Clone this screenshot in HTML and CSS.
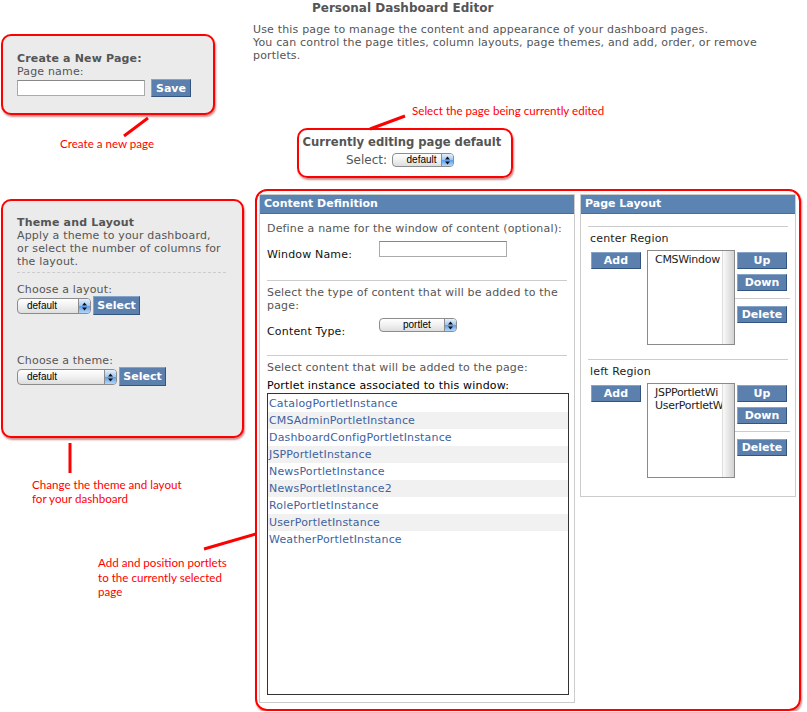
FILE: index.html
```html
<!DOCTYPE html>
<html lang="en">
  <head>
    <meta charset="UTF-8" />
    <meta name="viewport" content="width=device-width, initial-scale=1.0" />
    <title>Personal Dashboard Editor</title>
    <link rel="stylesheet" href="styles.css">
  </head>
  <body>
    <div class="page">
      <div class="left">
        <div class="box create">
          <div class="box-title">Create a New Page:</div>
          <div>Page name:</div>
          <div class="field-row">
            <input class="text-input" type="text">
            <button class="btn save">Save</button>
          </div>
        </div>

        <div class="box theme">
          <div class="box-title">Theme and Layout</div>
          <p class="box-text">Apply a theme to your dashboard,<br>or select the number of columns for<br>the layout.</p>
          <hr class="dashed">
          <div class="choose">Choose a layout:</div>
          <div class="field-row">
            <div class="select layout-select"><span class="value">default</span><span class="arrows"><svg width="5" height="9" viewBox="0 0 5 9"><path d="M2.5 0.5L5 3.5H0z M2.5 8.5L5 5.5H0z" fill="#111"/></svg></span></div>
            <button class="btn select-btn">Select</button>
          </div>
          <div class="choose theme-choose">Choose a theme:</div>
          <div class="field-row">
            <div class="select theme-select"><span class="value">default</span><span class="arrows"><svg width="5" height="9" viewBox="0 0 5 9"><path d="M2.5 0.5L5 3.5H0z M2.5 8.5L5 5.5H0z" fill="#111"/></svg></span></div>
            <button class="btn select-btn">Select</button>
          </div>
        </div>
      </div>

      <div class="right">
        <h1>Personal Dashboard Editor</h1>
        <p class="intro">Use this page to manage the content and appearance of your dashboard pages.<br>You can control the page titles, column layouts, page themes, and add, order, or remove portlets.</p>

        <div class="editing">
          <div class="editing-title">Currently editing page default</div>
          <div class="editing-row">
            <span>Select:</span>
            <div class="select page-select"><span class="value">default</span><span class="arrows"><svg width="5" height="9" viewBox="0 0 5 9"><path d="M2.5 0.5L5 3.5H0z M2.5 8.5L5 5.5H0z" fill="#111"/></svg></span></div>
          </div>
        </div>

        <div class="workspace">
          <div class="portlet content-def">
            <div class="portlet-header">Content Definition</div>
            <div class="portlet-body">
              <p class="step first">Define a name for the window of content (optional):</p>
              <div class="form-row">
                <label class="form-label">Window Name:</label>
                <input class="text-input window-name" type="text">
              </div>
              <hr class="rule">
              <p class="step">Select the type of content that will be added to the page:</p>
              <div class="form-row">
                <label class="form-label">Content Type:</label>
                <div class="select type-select"><span class="value">portlet</span><span class="arrows"><svg width="5" height="9" viewBox="0 0 5 9"><path d="M2.5 0.5L5 3.5H0z M2.5 8.5L5 5.5H0z" fill="#111"/></svg></span></div>
              </div>
              <hr class="rule second">
              <p class="step">Select content that will be added to the page:</p>
              <div class="list-caption">Portlet instance associated to this window:</div>
              <ul class="instance-list">
                <li>CatalogPortletInstance</li>
                <li>CMSAdminPortletInstance</li>
                <li>DashboardConfigPortletInstance</li>
                <li>JSPPortletInstance</li>
                <li>NewsPortletInstance</li>
                <li>NewsPortletInstance2</li>
                <li>RolePortletInstance</li>
                <li>UserPortletInstance</li>
                <li>WeatherPortletInstance</li>
              </ul>
            </div>
          </div>

          <div class="portlet page-layout">
            <div class="portlet-header">Page Layout</div>
            <div class="portlet-body">
              <div class="region">
                <div class="region-name">center Region</div>
                <div class="region-row">
                  <button class="btn small add">Add</button>
                  <div class="window-list">
                    <div class="window-items"><div>CMSWindow</div></div>
                    <div class="scroll"></div>
                  </div>
                  <div class="region-actions">
                    <button class="btn small">Up</button>
                    <button class="btn small">Down</button>
                    <hr class="rule">
                    <button class="btn small">Delete</button>
                  </div>
                </div>
              </div>
              <div class="region">
                <div class="region-name">left Region</div>
                <div class="region-row">
                  <button class="btn small add">Add</button>
                  <div class="window-list">
                    <div class="window-items"><div>JSPPortletWi</div><div>UserPortletW</div></div>
                    <div class="scroll"></div>
                  </div>
                  <div class="region-actions">
                    <button class="btn small">Up</button>
                    <button class="btn small">Down</button>
                    <hr class="rule">
                    <button class="btn small">Delete</button>
                  </div>
                </div>
              </div>
            </div>
          </div>
        </div>
      </div>
    </div>

    <!-- annotations -->
    <div class="note note-create">Create a new page</div>
    <div class="note note-select">Select the page being currently edited</div>
    <div class="note note-theme">Change the theme and layout<br>for your dashboard</div>
    <div class="note note-portlets">Add and position portlets<br>to the currently selected<br>page</div>
    <svg class="pointers" width="807" height="712" viewBox="0 0 807 712">
      <g stroke="#f00" stroke-width="3" stroke-linecap="butt">
        <line x1="148" y1="118" x2="124" y2="136"/>
        <line x1="405" y1="116" x2="370" y2="129"/>
        <line x1="70" y1="443" x2="70" y2="473"/>
        <line x1="204" y1="549" x2="256" y2="534"/>
      </g>
    </svg>
  </body>
</html>
```

FILE: styles.css
```css
body {
  margin: 0;
  font-family: "DejaVu Sans", Verdana, sans-serif;
  font-size: 11px;
  line-height: 13px;
  letter-spacing: 0.17px;
  color: #555;
  background: #fff;
}

p {
  margin: 0;
}

.page {
  display: flex;
}

.left {
  width: 253px;
  flex: none;
}

.right {
  flex: 1;
}

/* grey boxes on the left, outlined in red */
.box {
  box-sizing: border-box;
  background: #ebebeb;
  border: 2px solid #f00;
  border-radius: 10px;
  box-shadow: 1px 2px 2px rgba(140, 0, 0, 0.45);
}

.box-title {
  font-weight: bold;
}

.create {
  margin: 34px 0 0 1px;
  width: 214px;
  height: 81px;
  padding: 16px 14px 0;
}

.theme {
  margin: 84px 0 0 1px;
  width: 243px;
  height: 239px;
  padding: 15px 16px 0 14px;
}

.field-row {
  display: flex;
  align-items: center;
}

.create .field-row {
  margin-top: 1px;
}

.dashed {
  border: 0;
  border-top: 1px dashed #ccc;
  margin: 4px 0 0;
}

.choose {
  margin-top: 10px;
}

.theme-choose {
  margin-top: 39px;
}

.text-input {
  box-sizing: border-box;
  width: 128px;
  height: 16px;
  margin: 0;
  padding: 0;
  border: 1px solid #aaa;
  border-top-color: #888;
  background: #fff;
}

/* buttons */
.btn {
  box-sizing: border-box;
  margin: 0;
  padding: 0;
  height: 19px;
  font-family: "DejaVu Sans", Verdana, sans-serif;
  font-size: 11px;
  font-weight: bold;
  color: #fff;
  background: #5b80ae;
  border: 1px solid;
  border-color: #86a3c8 #33547e #33547e #86a3c8;
}

.save {
  width: 40px;
  height: 18px;
  margin-left: 6px;
}

.select-btn {
  width: 47px;
  margin-left: 2px;
}

.btn.small {
  width: 50px;
  height: 17px;
  display: block;
}

/* mac style popup */
.select {
  box-sizing: border-box;
  display: flex;
  height: 16px;
  border: 1px solid #8c8c8c;
  border-radius: 4px;
  background: linear-gradient(#ffffff, #f2f2f2 45%, #dedede);
  font-family: "Liberation Sans", Arial, sans-serif;
  font-size: 10px;
  line-height: 14px;
  letter-spacing: 0;
  color: #000;
  overflow: hidden;
}

.select .value {
  flex: 1;
  padding-left: 9px;
}

.select .arrows {
  width: 11px;
  display: flex;
  align-items: center;
  justify-content: center;
  border-left: 1px solid #8c8c8c;
  background: linear-gradient(#e4f0fd, #9cc5f3 50%, #5d9de8 51%, #b4d7fb);
}

.layout-select {
  width: 74px;
  margin-top: 1px;
}

.theme-select {
  width: 100px;
  margin-top: 1px;
}

.page-select {
  width: 62px;
  height: 14px;
  line-height: 12px;
}

.type-select {
  width: 78px;
  height: 14px;
  line-height: 12px;
}

.type-select .value {
  padding-left: 23px;
}

/* right column */
h1 {
  margin: 2px 0 0 59px;
  font-size: 12px;
  line-height: 13px;
  letter-spacing: 0;
  color: #555;
}

.intro {
  margin-top: 8px;
  width: 530px;
}

.editing {
  box-sizing: border-box;
  margin: 66px 0 0 44px;
  width: 216px;
  height: 50px;
  padding-top: 4px;
  border: 2px solid #f00;
  border-radius: 10px;
  box-shadow: 1px 2px 2px rgba(140, 0, 0, 0.45);
  text-align: center;
}

.editing-title {
  padding-right: 6px;
  white-space: nowrap;
  font-size: 11.6px;
  line-height: 16px;
  letter-spacing: 0;
  font-weight: bold;
}

.editing-row {
  display: flex;
  justify-content: center;
  align-items: center;
  gap: 5px;
  margin-top: 3px;
  padding-right: 10px;
  font-size: 12px;
  letter-spacing: 0;
}

.workspace {
  box-sizing: border-box;
  display: flex;
  align-items: flex-start;
  gap: 5px;
  margin: 11px 0 0 2px;
  width: 546px;
  height: 522px;
  padding: 3px 0 0 2px;
  border: 2px solid #f00;
  border-radius: 12px;
  box-shadow: 1px 2px 2px rgba(140, 0, 0, 0.45);
}

.portlet {
  box-sizing: border-box;
  border: 1px solid #ccc;
}

.content-def {
  width: 316px;
  height: 509px;
}

.page-layout {
  width: 216px;
  height: 303px;
}

.portlet-header {
  height: 18px;
  line-height: 18px;
  padding-left: 4px;
  font-weight: bold;
  letter-spacing: 0;
  color: #fff;
  background: #5b84b2;
  border-bottom: 1px solid #4a6e98;
}

.portlet-body {
  padding: 0 7px;
}

.step {
  margin-top: 5px;
}

.step.first {
  margin-top: 8px;
}

.rule {
  border: 0;
  border-top: 1px solid #ccc;
  margin: 0;
}

.content-def .rule {
  margin-top: 19px;
}

.content-def .rule.second {
  margin-top: 17px;
}

.form-row {
  display: flex;
  align-items: flex-start;
  margin-top: 6px;
}

.form-label {
  width: 112px;
  margin-top: 7px;
  color: #111;
}

.list-caption {
  margin-top: 5px;
  padding-bottom: 1px;
  color: #000;
}

.instance-list {
  box-sizing: border-box;
  list-style: none;
  margin: 0;
  padding: 1px 0 0;
  width: 302px;
  height: 302px;
  border: 1px solid #333;
}

.instance-list li {
  height: 17px;
  line-height: 17px;
  padding-left: 1px;
  color: #3e62a0;
}

.instance-list li:nth-child(even) {
  background: #f1f1f1;
}

/* page layout regions */
.region {
  border-top: 1px solid #ccc;
  height: 132px;
}

.page-layout .region:first-child {
  margin-top: 12px;
}

.region-name {
  margin-top: 5px;
  padding-left: 2px;
  color: #222;
}

.region-row {
  display: flex;
  align-items: flex-start;
  margin-top: 5px;
}

.add {
  margin: 2px 6px 0 3px;
}

.window-list {
  box-sizing: border-box;
  display: flex;
  width: 88px;
  height: 95px;
  border: 1px solid #8a8a8a;
}

.window-items {
  flex: 1;
  overflow: hidden;
  white-space: nowrap;
  padding: 2px 0 0 7px;
  letter-spacing: -0.3px;
  color: #222;
}

.scroll {
  width: 11px;
  border-left: 1px solid #ddd;
  background: linear-gradient(to right, #fafafa, #e2e2e2 60%, #d2d2d2);
}

.region-actions {
  margin-left: 2px;
  padding-top: 2px;
  width: 51px;
}

.region-actions .btn + .btn {
  margin-top: 5px;
}

.region-actions .rule {
  margin: 7px -2px 7px -2px;
}

/* annotation layer */
.note {
  position: absolute;
  font-family: Lato, "Liberation Sans", sans-serif;
  font-size: 11.6px;
  line-height: 14px;
  letter-spacing: 0;
  color: #f00;
}

.note-create {
  left: 60px;
  top: 137px;
}

.note-select {
  left: 412px;
  top: 104px;
}

.note-theme {
  left: 32px;
  top: 478px;
}

.note-portlets {
  left: 98px;
  top: 556px;
  line-height: 14.5px;
}

.pointers {
  position: absolute;
  left: 0;
  top: 0;
  pointer-events: none;
}
```
